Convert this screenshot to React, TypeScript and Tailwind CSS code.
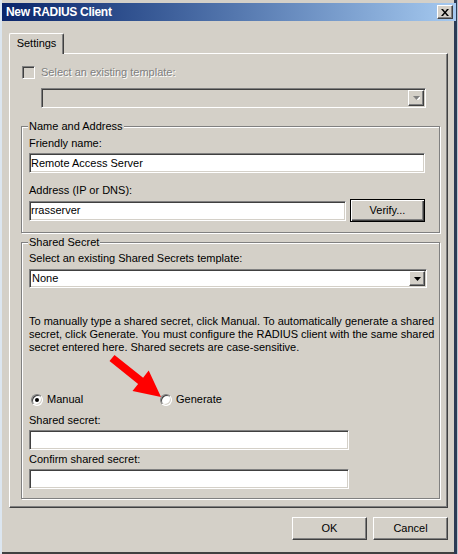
import React from "react";

const F = "font-['Liberation_Sans',Arial,sans-serif]";

const sunken =
  "border border-t-[#808080] border-l-[#808080] border-b-white border-r-white shadow-[inset_1px_1px_0_#404040,inset_-1px_-1px_0_#d4d0c8]";
const raised =
  "border border-t-white border-l-white border-b-[#404040] border-r-[#404040] shadow-[inset_-1px_-1px_0_#808080]";
const etched = "relative border border-[#808080] shadow-[inset_1px_1px_0_#ffffff,1px_1px_0_#ffffff]";
const disabledText = "text-[#808080] [text-shadow:1px_1px_0_#ffffff]";

function DropBtn({ disabled }: { disabled?: boolean }) {
  return (
    <div className={`w-[16px] h-full flex items-center justify-center bg-[#d4d0c8] ${raised}`}>
      <svg width="7" height="4" viewBox="0 0 7 4">
        {disabled && <path d="M1 1h7L4.5 5z" fill="#ffffff" />}
        <path d="M0 0h7L3.5 4z" fill={disabled ? "#808080" : "#000000"} />
      </svg>
    </div>
  );
}

function TextBox({ w, value, className = "" }: { w: string; value?: string; className?: string }) {
  return (
    <div className={`${w} h-[20px] bg-white ${sunken} pl-[1px] flex items-center whitespace-nowrap ${className}`}>
      {value}
    </div>
  );
}

function Radio({ checked }: { checked?: boolean }) {
  return (
    <div className="w-[12px] h-[12px] rounded-full bg-white border border-t-[#808080] border-l-[#808080] border-b-white border-r-white shadow-[inset_1px_1px_0_#404040,inset_-1px_-1px_0_#d4d0c8] flex items-center justify-center">
      {checked && <div className="w-[4px] h-[4px] rounded-full bg-black" />}
    </div>
  );
}

function Button({ label, w, isDefault }: { label: string; w: string; isDefault?: boolean }) {
  const cls = isDefault
    ? "border border-black shadow-[inset_1px_1px_0_#ffffff,inset_-1px_-1px_0_#404040,inset_-2px_-2px_0_#808080]"
    : raised;
  return <div className={`${w} h-[23px] bg-[#d4d0c8] ${cls} flex items-center justify-center`}>{label}</div>;
}

export default function App() {
  return (
    <div
      className={`${F} relative w-[458px] h-[554px] bg-[#d4d0c8] text-[11px] leading-[13px] text-black flex flex-col overflow-hidden shadow-[inset_2px_0_0_#dce6f0,inset_-1px_0_0_#b8c4d0,inset_-4px_0_0_#2b3b55,inset_0_-2px_0_#404040]`}
    >
      {/* Title bar */}
      <div className="mt-[3px] mx-[2px] h-[18px] flex items-center justify-between bg-linear-to-r from-[#0a246a] to-[#a6caf0] pl-[4px] pr-[3px]">
        <span className="text-white font-bold text-[12px] tracking-[-0.3px]">New RADIUS Client</span>
        <div className={`w-[16px] h-[14px] bg-[#d4d0c8] ${raised} flex items-center justify-center`}>
          <svg width="8" height="7" viewBox="0 0 8 7">
            <path d="M0 0h2l2 2.5L6 0h2L5 3.5 8 7H6L4 4.5 2 7H0l3-3.5z" fill="#000000" />
          </svg>
        </div>
      </div>

      {/* Body */}
      <div className="flex-1 flex flex-col pl-[9px] pr-[10px] pt-[12px]">
        {/* Tab */}
        <div className="relative z-10 -mb-[1px] w-[55px] h-[21px] bg-[#d4d0c8] border-t border-l border-white border-r border-r-[#404040] shadow-[inset_-1px_0_0_#808080] rounded-t-[2px] flex items-center justify-center pb-[1px]">
          Settings
        </div>

        {/* Panel */}
        <div className="h-[455px] flex flex-col border border-t-white border-l-white border-r-[#404040] border-b-[#404040] shadow-[inset_-1px_-1px_0_#808080]">
          {/* Template checkbox */}
          <div className="ml-[12px] mt-[12px] h-[13px] flex items-center gap-[6px]">
            <div className={`w-[13px] h-[13px] bg-[#d4d0c8] ${sunken}`} />
            <span className={disabledText}>Select an existing template:</span>
          </div>
          <div className={`ml-[31px] mt-[9px] w-[385px] h-[20px] bg-[#d4d0c8] ${sunken} p-[1px] flex`}>
            <div className="flex-1" />
            <DropBtn disabled />
          </div>

          {/* Name and Address */}
          <div className={`ml-[11px] mt-[18px] w-[419px] ${etched} pl-[7px] pt-[10px] pb-[10px] flex flex-col`}>
            <span className="absolute left-[6px] -top-[7px] px-[1px] bg-[#d4d0c8]">Name and Address</span>
            <span>Friendly name:</span>
            <TextBox w="w-[396px]" value="Remote Access Server" className="mt-[3px]" />
            <span className="mt-[11px]">Address (IP or DNS):</span>
            <div className="mt-[2px] h-[23px] flex items-center gap-[4px]">
              <TextBox w="w-[317px]" value="rrasserver" />
              <Button label="Verify..." w="w-[75px]" isDefault />
            </div>
          </div>

          {/* Shared Secret */}
          <div className={`ml-[11px] mt-[9px] w-[419px] ${etched} pl-[7px] pt-[9px] pb-[9px] flex flex-col`}>
            <span className="absolute left-[6px] -top-[7px] px-[1px] bg-[#d4d0c8]">Shared Secret</span>
            <span>Select an existing Shared Secrets template:</span>
            <div className={`mt-[4px] w-[398px] h-[19px] bg-white ${sunken} p-[1px] flex`}>
              <div className="flex-1 pl-[1px] flex items-center">None</div>
              <DropBtn />
            </div>
            <p className="mt-[27px] whitespace-nowrap">
              To manually type a shared secret, click Manual. To automatically generate a shared
              <br />
              secret, click Generate. You must configure the RADIUS client with the same shared
              <br />
              secret entered here. Shared secrets are case-sensitive.
            </p>
            <div className="mt-[39px] h-[13px] flex items-center">
              <div className="ml-[2px] w-[129px] flex items-center gap-[4px]">
                <Radio checked />
                <span>Manual</span>
              </div>
              <div className="flex items-center gap-[4px]">
                <Radio />
                <span>Generate</span>
              </div>
            </div>
            <span className="mt-[8px]">Shared secret:</span>
            <TextBox w="w-[320px]" className="mt-[3px]" />
            <span className="mt-[3px]">Confirm shared secret:</span>
            <TextBox w="w-[320px]" className="mt-[3px]" />
          </div>
        </div>

        {/* Buttons */}
        <div className="mt-[9px] flex justify-end gap-[6px]">
          <Button label="OK" w="w-[75px]" />
          <Button label="Cancel" w="w-[75px]" />
        </div>
      </div>

      {/* Red annotation arrow */}
      <svg
        className="absolute left-0 top-0 pointer-events-none"
        width="458"
        height="554"
        viewBox="0 0 458 554"
      >
        <polygon
          points="109.5,361.1 138.1,383.9 132.5,391 161,397 148.7,370.6 143.1,377.7 114.5,354.9"
          fill="#ff0000"
        />
      </svg>
    </div>
  );
}
